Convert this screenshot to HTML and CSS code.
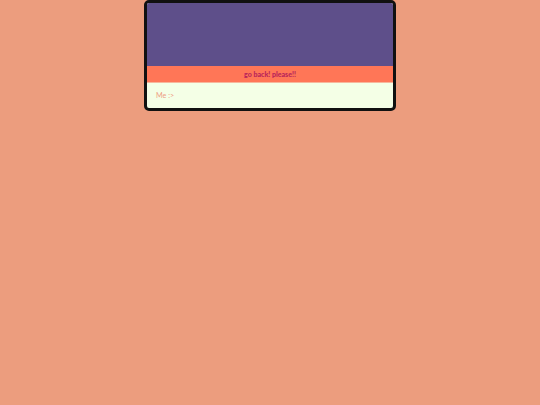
FILE: index.html
```html
<!DOCTYPE html>
<html>
<head>
<meta charset="utf-8">
<link rel="stylesheet" href="styles.css">
</head>
<body>
<div class="card">
  <div class="hero"></div>
  <div class="bar">go back! please!!</div>
  <div class="foot">Me :&gt;</div>
</div>
</body>
</html>
```
FILE: styles.css
```css
html, body {
  margin: 0;
  padding: 0;
  background: #ec9d7e;
  font-family: Lato, "Liberation Sans", sans-serif;
}
.card {
  width: 246px;
  margin: 0 auto;
  border: 3px solid #111;
  border-radius: 5px;
  overflow: hidden;
  background: #f4ffe6;
}
.hero {
  height: 63px;
  background: #5e4f8a;
}
.bar {
  height: 16px;
  background: #ff7657;
  color: #b8245a;
  font-weight: 900;
  font-size: 7px;
  display: flex;
  align-items: center;
  justify-content: center;
  border-bottom: 1px solid #f7b79c;
}
.foot {
  height: 25px;
  padding-left: 9px;
  display: flex;
  align-items: center;
  font-size: 7.2px;
  color: #ee9c84;
}
```
